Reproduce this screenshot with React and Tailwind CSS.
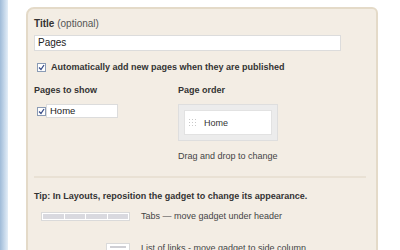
import React from "react";

const font = { fontFamily: '"Liberation Sans", Arial, sans-serif' };

const Check = () => (
  <span className="w-[9px] h-[9px] border border-[#8a9bb5] bg-white flex items-center justify-center shrink-0">
    <svg width="7" height="7" viewBox="0 0 7 7">
      <path d="M1 3.5 L3 5.5 L6 1" fill="none" stroke="#3a4f8a" strokeWidth="1.3" />
    </svg>
  </span>
);

const Grip = () => (
  <div className="grid grid-cols-3 gap-[2px] w-[7px]">
    {Array.from({ length: 9 }).map((_, i) => (
      <span key={i} className="w-[1px] h-[1px] bg-[#c9c9c9]" />
    ))}
  </div>
);

export default function App() {
  return (
    <div className="w-[400px] h-[250px] overflow-hidden flex bg-white text-[#333]" style={font}>
      <div className="w-[8px] h-full bg-gradient-to-r from-[#9fbbd8] to-[#e4eef8] shrink-0" />
      <div className="ml-[18px] mt-[7px] w-[352px] h-[260px] shrink-0 border-2 border-[#e4dac8] rounded-tl-[8px] rounded-tr-[6px] bg-[#f3ede4] pl-[6px] pr-[8px] pt-[9px] text-[9px] leading-[12px]">
        <div className="text-[10px]">
          <span className="font-bold text-[#333]">Title</span>{" "}
          <span className="text-[#555]">(optional)</span>
        </div>
        <div className="mt-[5px] w-[307px] h-[16px] bg-white border border-[#dcdcdc] pl-[3px] flex items-center text-[10px] text-[#222]">
          Pages
        </div>
        <div className="mt-[10px] ml-[3px] flex items-center gap-[5px]">
          <Check />
          <span className="text-[#333] font-bold">Automatically add new pages when they are published</span>
        </div>
        <div className="mt-[11px] flex">
          <div className="w-[144px]">
            <div className="font-bold">Pages to show</div>
            <div className="mt-[8px] ml-[3px] flex items-center">
              <Check />
              <div className="w-[72px] h-[14px] bg-white border border-[#dcdcdc] pl-[3px] flex items-center text-[9.5px] text-[#222]">
                Home
              </div>
            </div>
          </div>
          <div>
            <div className="font-bold">Page order</div>
            <div className="mt-[8px] w-[100px] h-[37px] border border-[#dedede] bg-[#ececec] p-[5px]">
              <div className="h-full bg-white border border-[#e2e2e2] flex items-center pl-[4px] gap-[8px] text-[#333]">
                <Grip />
                <span>Home</span>
              </div>
            </div>
            <div className="mt-[9px] text-[#444]">Drag and drop to change</div>
          </div>
        </div>
        <div className="mt-[14px] mr-[2px] h-[2px] bg-[#e9e1d4]" />
        <div className="mt-[12px] font-bold">Tip: In Layouts, reposition the gadget to change its appearance.</div>
        <div className="mt-[8px] flex items-center">
          <div className="ml-[7px] w-[89px] h-[9px] border border-[#dadada] bg-white flex gap-[1px] p-[1px]">
            {Array.from({ length: 4 }).map((_, i) => (
              <span key={i} className="flex-1 bg-[#d9d9df]" />
            ))}
          </div>
          <span className="ml-[11px] text-[#444]">Tabs — move gadget under header</span>
        </div>
        <div className="mt-[20px] flex items-center">
          <div className="ml-[72px] w-[24px] h-[11px] border border-[#dadada] bg-white flex items-start justify-center pt-[2px]">
            <span className="w-[16px] h-[2px] bg-[#cfcfd4]" />
          </div>
          <span className="ml-[11px] text-[#444]">List of links - move gadget to side column</span>
        </div>
      </div>
    </div>
  );
}
